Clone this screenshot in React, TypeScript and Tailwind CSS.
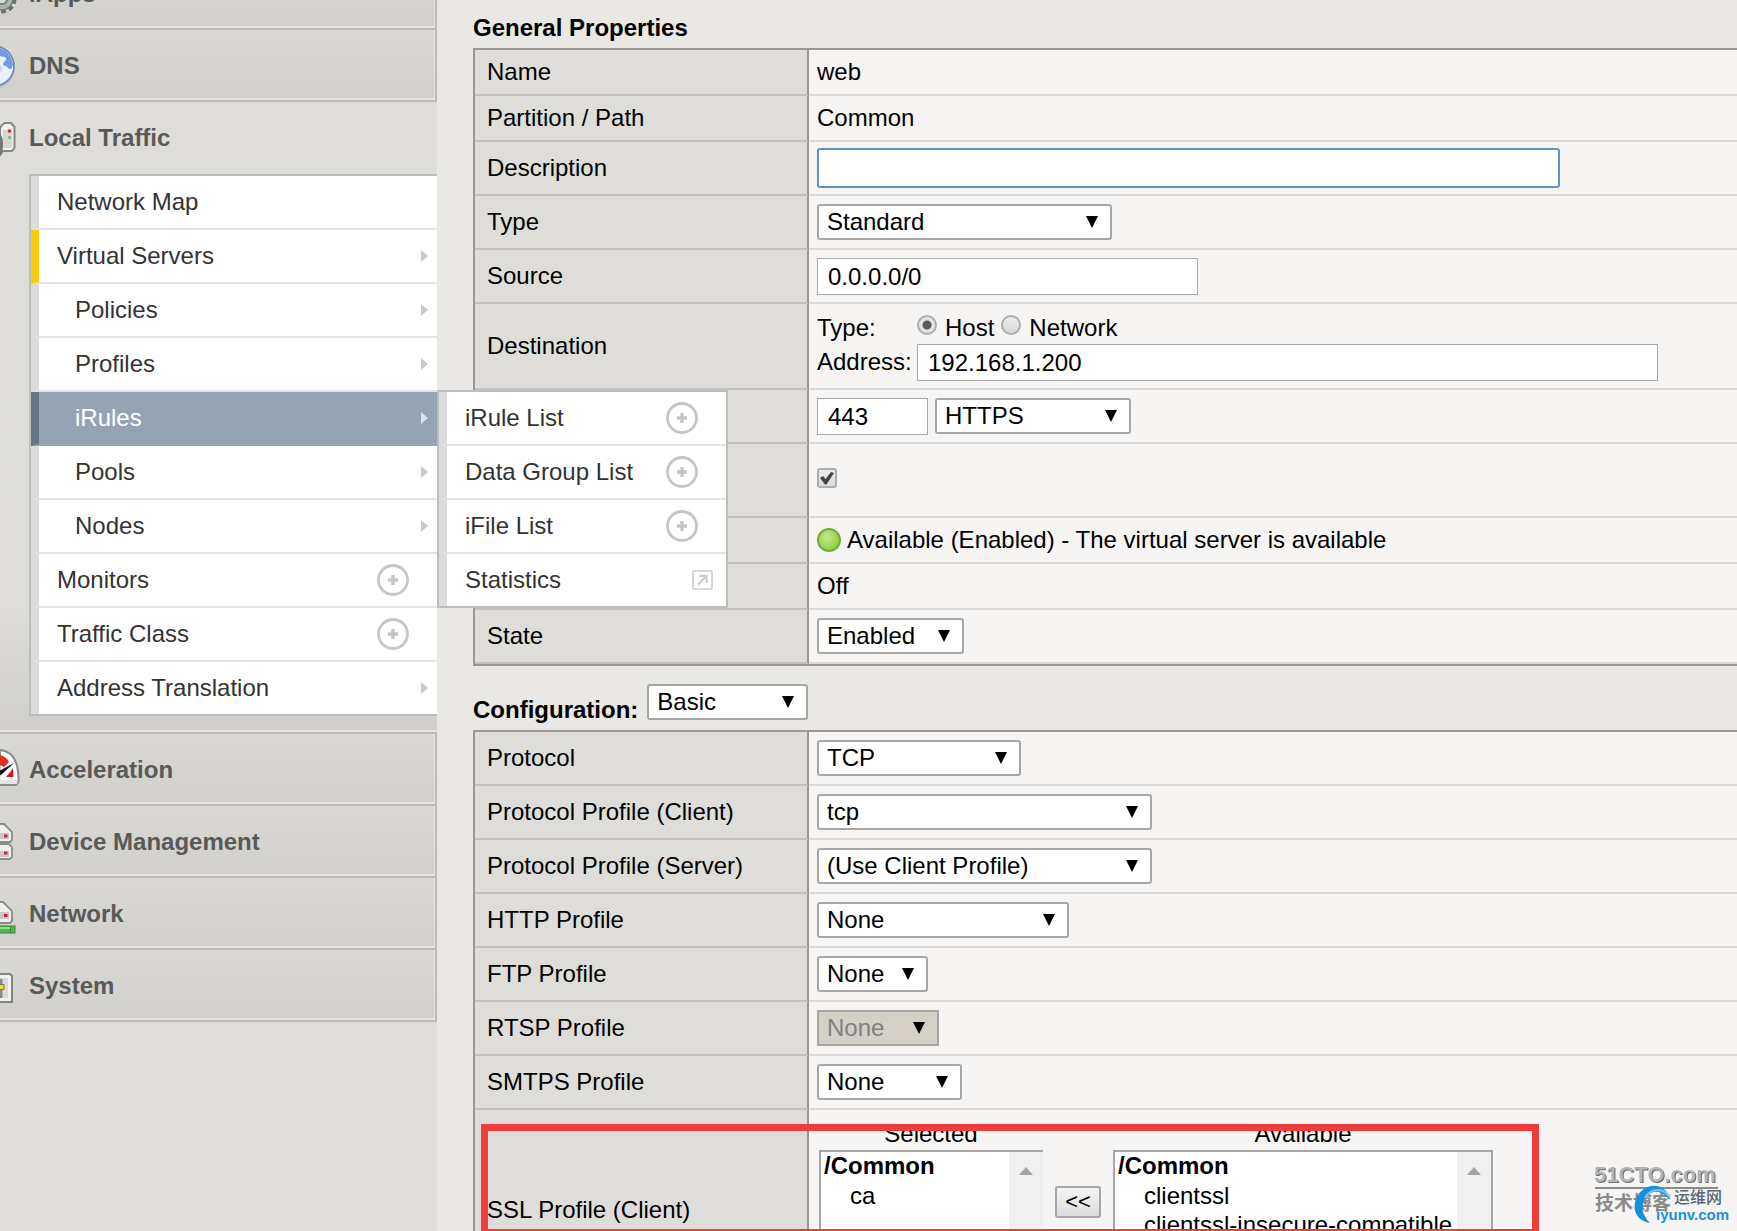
import type { ReactNode } from "react";

interface MenuItem {
  text: string;
  nested?: boolean;
  action?: "arrow" | "plus" | "popup";
  state?: "current" | "hover";
}

const menu: MenuItem[] = [
  { text: "Network Map" },
  { text: "Virtual Servers", action: "arrow", state: "current" },
  { text: "Policies", nested: true, action: "arrow" },
  { text: "Profiles", nested: true, action: "arrow" },
  { text: "iRules", nested: true, action: "arrow", state: "hover" },
  { text: "Pools", nested: true, action: "arrow" },
  { text: "Nodes", nested: true, action: "arrow" },
  { text: "Monitors", action: "plus" },
  { text: "Traffic Class", action: "plus" },
  { text: "Address Translation", action: "arrow" },
];

const flyout: MenuItem[] = [
  { text: "iRule List", action: "plus" },
  { text: "Data Group List", action: "plus" },
  { text: "iFile List", action: "plus" },
  { text: "Statistics", action: "popup" },
];

const profiles = [
  { id: "protocol", label: "Protocol", value: "TCP", width: "w-[204px]" },
  { id: "client", label: "Protocol Profile (Client)", value: "tcp", width: "w-[335px]" },
  { id: "server", label: "Protocol Profile (Server)", value: "(Use Client Profile)", width: "w-[335px]" },
  { id: "http", label: "HTTP Profile", value: "None", width: "w-[252px]" },
  { id: "ftp", label: "FTP Profile", value: "None", width: "w-[111px]" },
  { id: "rtsp", label: "RTSP Profile", value: "None", width: "w-[122px]", disabled: true },
  { id: "smtps", label: "SMTPS Profile", value: "None", width: "w-[145px]" },
];

function Arrow({ light }: { light?: boolean }) {
  return (
    <svg className="mr-[9px] h-3 w-[7px]" viewBox="0 0 7 12">
      <path d="M0 0L7 6L0 12Z" fill={light ? "#dfe3e8" : "#c9c9c9"} />
    </svg>
  );
}

function Plus() {
  return (
    <svg className="mr-7 size-8" viewBox="0 0 32 32" fill="none" stroke="#c6c6c6">
      <circle cx="16" cy="16" r="14.5" strokeWidth="2.8" />
      <path d="M16 11V21M11 16H21" strokeWidth="3.4" />
    </svg>
  );
}

function Popup() {
  return (
    <svg className="mr-[13px] h-5 w-[21px]" viewBox="0 0 21 20" fill="none" stroke="#cccccc">
      <rect x="1" y="1" width="19" height="18" rx="1" strokeWidth="1.6" />
      <path d="M6 14.5L13 7.5" strokeWidth="2.4" />
      <path d="M7.5 5.8H14.6V13" strokeWidth="2.2" />
    </svg>
  );
}

function GearIcon() {
  return (
    <svg className="h-16 w-5" viewBox="0 0 20 64">
      <circle cx="2" cy="39" r="12" fill="none" stroke="#66706b" strokeWidth="5" strokeDasharray="4.5 3" />
      <circle cx="2" cy="39" r="11" fill="#a9b5af" stroke="#6f7b75" strokeWidth="1.5" />
      <circle cx="2" cy="39" r="5" fill="#dedfda" stroke="#77827d" strokeWidth="2" />
    </svg>
  );
}

function GlobeIcon() {
  return (
    <svg className="h-16 w-5" viewBox="0 0 20 64">
      <circle cx="-6" cy="36" r="21" fill="#bcbbb7" opacity=".6" />
      <circle cx="-6" cy="34" r="20" fill="#e9f1fb" stroke="#6686c4" strokeWidth="1.6" />
      <path d="M0 16C6 18 10 23 12 28L13 32C12 37 11 38 8 36C6 33 4 35 3 32C4 29 7 29 6 26C4 24 2 25 0 24Z" fill="#7399e0" />
      <path d="M0 33L3 36L2 39L0 40Z" fill="#c4d7f4" />
    </svg>
  );
}

function ServerIcon() {
  return (
    <svg className="h-16 w-5" viewBox="0 0 20 64">
      <path d="M2 19L5 17H11L14.500 21V42L12 45H3L0 49V22Z" fill="#efefed" stroke="#868683" strokeWidth="2" />
      <rect x="3" y="24" width="9" height="18" fill="#d6d6d4" />
      <path d="M-1 29C3 30 3 46 -1 50" fill="#777" stroke="#777" strokeWidth="2" />
      <circle cx="9.500" cy="25" r="1.800" fill="#d5202a" />
      <path d="M9.500 30V33" stroke="#6fc06c" strokeWidth="2.500" />
    </svg>
  );
}

function GaugeIcon() {
  return (
    <svg className="h-16 w-5" viewBox="0 0 20 64">
      <path d="M0 14C12 15 19 25 18.500 46L16 49H-1Z" fill="#fff" stroke="#8b8b89" strokeWidth="2" />
      <path d="M0 44H17V48H0Z" fill="#e6e6e2" />
      <path d="M0 19C4 20 7 22 9 26L4 31L0 29Z" fill="#e0301f" />
      <path d="M13 32L11 35L6 41H13.500Z" fill="#d8141d" />
      <path d="M-1 35L14 27L1 39L-1 39Z" fill="#111" />
    </svg>
  );
}

function DevicesIcon() {
  return (
    <svg className="h-16 w-5" viewBox="0 0 20 64" stroke="#8b8b89" strokeWidth="1.800">
      <path d="M-1 16H4L12 24V32L10 34H-1Z" fill="#efefed" />
      <path d="M-1 36H9L12 39V49L10 51H-1Z" fill="#efefed" />
      <path d="M0 25H9V31H0M0 43H9V49H0" fill="#c9c9c7" stroke="none" />
      <path d="M4 28H7.500M4 45H7.500" stroke="#d5202a" strokeWidth="3" />
    </svg>
  );
}

function NetworkIcon() {
  return (
    <svg className="h-16 w-5" viewBox="0 0 20 64">
      <path d="M-1 22H3L12 31V41L10 43H-1Z" fill="#efefed" stroke="#8b8b89" strokeWidth="1.800" />
      <rect x="0" y="32" width="9" height="7" fill="#c9c9c7" />
      <path d="M4 35.500H7.500" stroke="#d5202a" strokeWidth="3" />
      <rect x="-1" y="46" width="16" height="7" fill="#46c043" stroke="#4c7d49" />
      <path d="M0 48H10" stroke="#a4e8a0" strokeWidth="1.500" />
      <path d="M10.500 46V53" stroke="#3b8a38" />
    </svg>
  );
}

function SystemIcon() {
  return (
    <svg className="h-16 w-5" viewBox="0 0 20 64">
      <path d="M-1 22H10L12 24V50H-1Z" fill="#f1f1ef" stroke="#83837f" strokeWidth="2" />
      <rect x="0" y="26" width="8" height="20" fill="#dbdbd8" />
      <path d="M1 27V46" stroke="#8a8a88" strokeWidth="3" />
      <path d="M-1 35H4" stroke="#e9dc3c" strokeWidth="4" />
      <path d="M-1 32.500H4V37.500H-1" fill="none" stroke="#777454" />
    </svg>
  );
}

function Section({ title, icon }: { title: string; icon: ReactNode }) {
  return (
    <div className="border-r-2 border-b-2 border-[#bcbbb9]">
      <a
        href="#"
        className="flex h-[70px] items-center gap-[9px] border-r border-b-2 border-[#e6e5e2] bg-linear-to-b from-[#dad9d5] to-[#d0cfcb] font-bold text-[#595959]"
      >
        {icon}
        <span className="pt-1">{title}</span>
      </a>
    </div>
  );
}

function MenuRow({ item, children }: { item: MenuItem; children?: ReactNode }) {
  const colors =
    item.state === "hover"
      ? "border-l-[#677681] border-b-[#96a3b3] bg-[#96a3b3] text-white"
      : item.state === "current"
        ? "border-l-[#fbcb09] border-b-[#e4e4e4] bg-white text-[#333]"
        : "border-l-[#dcdcdc] border-b-[#e4e4e4] bg-white text-[#333]";
  return (
    <li className={`relative h-[54px] border-b-2 border-l-8 last:h-[52px] last:border-b-0 ${colors}`}>
      <a href="#" className={`flex h-[52px] items-center justify-between ${item.nested ? "pl-9" : "pl-[18px]"}`}>
        <span>{item.text}</span>
        {item.action === "arrow" && <Arrow light={item.state === "hover"} />}
        {item.action === "plus" && <Plus />}
        {item.action === "popup" && <Popup />}
      </a>
      {children}
    </li>
  );
}

function Sidebar() {
  return (
    <nav className="w-[437px] shrink-0 bg-[#deddd9]">
      <div className="-mt-[42px]">
        <Section title="iApps" icon={<GearIcon />} />
        <Section title="DNS" icon={<GlobeIcon />} />
      </div>
      <div className="border-b-2 border-[#bcbbb9]">
        <div className="border-b-2 border-[#e6e5e2] bg-linear-to-b from-[#deddd9] from-80% to-[#d0cfcb]">
          <a href="#" className="flex h-[72px] items-center gap-[9px] font-bold text-[#595959]">
            <ServerIcon />
            <span>Local Traffic</span>
          </a>
          <div className="pb-[14px] pl-[29px]">
            <ul className="border-y-2 border-l-2 border-[#bdbdbd]">
              {menu.map((item) => (
                <MenuRow key={item.text} item={item}>
                  {item.state === "hover" && (
                    <ul className="absolute -top-[2px] left-full z-10 w-[291px] border-2 border-[#bdbdbd]">
                      {flyout.map((sub) => (
                        <MenuRow key={sub.text} item={sub} />
                      ))}
                    </ul>
                  )}
                </MenuRow>
              ))}
            </ul>
          </div>
        </div>
      </div>
      <Section title="Acceleration" icon={<GaugeIcon />} />
      <Section title="Device Management" icon={<DevicesIcon />} />
      <Section title="Network" icon={<NetworkIcon />} />
      <Section title="System" icon={<SystemIcon />} />
    </nav>
  );
}

function Select({
  id,
  value,
  width,
  label,
  disabled,
}: {
  id: string;
  value: string;
  width: string;
  label?: string;
  disabled?: boolean;
}) {
  return (
    <span className={`relative inline-block h-9 align-middle ${width}`}>
      <select
        id={id}
        aria-label={label}
        disabled={disabled}
        className={`h-9 w-full appearance-none border-2 border-[#a6a6a6] pl-2 leading-7 ${
          disabled ? "bg-[#d4d0c8] text-[#808080]" : "rounded-[3px] bg-white text-black"
        }`}
      >
        <option>{value}</option>
      </select>
      <svg className="pointer-events-none absolute top-3 right-[14px] size-3" viewBox="0 0 12 12">
        <path d="M0 0H12L6 12Z" />
      </svg>
    </span>
  );
}

function TextBox({
  id,
  value,
  width,
  label,
}: {
  id?: string;
  value: string;
  width: string;
  label?: string;
}) {
  return (
    <input
      id={id}
      type="text"
      aria-label={label}
      defaultValue={value}
      className={`block h-[37px] border border-[#a9a9a9] bg-white px-[10px] pt-[2px] ${width}`}
    />
  );
}

function Row({
  label,
  htmlFor,
  height = "h-[54px]",
  children,
}: {
  label?: string;
  htmlFor?: string;
  height?: string;
  children: ReactNode;
}) {
  return (
    <tr className={height}>
      <th
        scope="row"
        className="w-[334px] border-r-2 border-b-2 border-r-[#999895] border-b-[#c2c1bd] bg-[#deddda] pl-3 text-left font-normal"
      >
        {htmlFor ? <label htmlFor={htmlFor}>{label}</label> : label}
      </th>
      <td className="border-b-2 border-[#dbdad8] bg-[#f6f5f3] pl-2">{children}</td>
    </tr>
  );
}

function Radio({ label, checked }: { label: string; checked?: boolean }) {
  return (
    <label className="flex items-center gap-2">
      <input
        type="radio"
        name="destination-type"
        defaultChecked={checked}
        className="mb-[6px] size-5 appearance-none rounded-full border-2 border-[#adadad] bg-[linear-gradient(#ececec,#d9d9d9)] checked:bg-[radial-gradient(circle,#5c5c5c_4px,#e4e4e4_5px)]"
      />
      {label}
    </label>
  );
}

function ProfileList({
  title,
  options,
  width,
  border,
}: {
  title: string;
  options: string[];
  width: string;
  border: string;
}) {
  const id = `ssl-${title.toLowerCase()}`;
  return (
    <div className={width}>
      <label htmlFor={id} className="block pb-[2px] text-center leading-7">
        {title}
      </label>
      <div className={`flex h-[150px] border-[#a6a6a6] bg-white ${border}`}>
        <select
          id={id}
          multiple
          className="min-w-0 flex-1 overflow-hidden pl-[1px] [scrollbar-width:none]"
        >
          <optgroup label="/Common" className="p-0 leading-[30px] font-bold">
            {options.map((option) => (
              <option key={option} className="p-0 pl-7 leading-[30px] font-normal">
                {option}
              </option>
            ))}
          </optgroup>
        </select>
        <div className="flex w-[34px] justify-center bg-[#f0f0f0] pt-[15px]">
          <svg className="h-2 w-[14px]" viewBox="0 0 14 8">
            <path d="M0 8L7 0L14 8Z" fill="#a3a3a3" />
          </svg>
        </div>
      </div>
    </div>
  );
}

function GeneralProperties() {
  return (
    <section>
      <h2 className="h-12 pt-[14px] leading-7 font-bold">General Properties</h2>
      <table className="w-full border-separate border-spacing-0 border-y-2 border-l-2 border-[#999895]">
        <tbody>
          <Row label="Name" height="h-[46px]">
            web
          </Row>
          <Row label="Partition / Path" height="h-[46px]">
            Common
          </Row>
          <Row label="Description" htmlFor="description">
            <input
              id="description"
              type="text"
              className="block h-10 w-[743px] rounded-[3px] border-2 border-[#6490c8] bg-white px-2 outline-none"
            />
          </Row>
          <Row label="Type" htmlFor="type">
            <Select id="type" value="Standard" width="w-[295px]" />
          </Row>
          <Row label="Source" htmlFor="source">
            <TextBox id="source" value="0.0.0.0/0" width="w-[381px]" />
          </Row>
          <Row label="Destination" height="h-[86px]">
            <div className="grid grid-cols-[100px_1fr] items-center leading-8">
              <span>Type:</span>
              <div className="flex gap-[7px]">
                <Radio label="Host" checked />
                <Radio label="Network" />
              </div>
              <label htmlFor="address">Address:</label>
              <TextBox id="address" value="192.168.1.200" width="w-[741px]" />
            </div>
          </Row>
          <Row>
            <div className="flex gap-[7px]">
              <TextBox label="Port" value="443" width="w-[111px]" />
              <Select id="service" label="Service" value="HTTPS" width="w-[196px]" />
            </div>
          </Row>
          <Row height="h-[74px]">
            <span className="relative mb-1 block size-5">
              <input
                type="checkbox"
                aria-label="Notify"
                defaultChecked
                className="peer block size-5 appearance-none rounded-[3px] border-2 border-[#adadad] bg-[linear-gradient(#ececec,#dcdcdc)]"
              />
              <svg
                className="pointer-events-none absolute inset-0 hidden size-5 peer-checked:block"
                viewBox="0 0 20 20"
              >
                <path d="M3 10L6 8L8.500 11L14 4L17 5L9.500 16.500H8Z" fill="#444" />
              </svg>
            </span>
          </Row>
          <Row height="h-[46px]">
            <div className="flex items-center gap-[6px]">
              <span className="size-6 rounded-full border-2 border-[#74ac3c] bg-[radial-gradient(circle_at_40%_35%,#c3ea86,#7ec434)]" />
              Available (Enabled) - The virtual server is available
            </div>
          </Row>
          <Row height="h-[46px]">Off</Row>
          <Row label="State" htmlFor="state">
            <Select id="state" value="Enabled" width="w-[147px]" />
          </Row>
        </tbody>
      </table>
    </section>
  );
}

function Configuration() {
  return (
    <section>
      <div className="flex h-16 items-end gap-[9px] pb-[6px]">
        <label htmlFor="configuration" className="leading-7 font-bold">
          Configuration:
        </label>
        <div className="mb-1 flex">
          <Select id="configuration" value="Basic" width="w-[161px]" />
        </div>
      </div>
      <div className="relative">
        <table className="w-full border-separate border-spacing-0 border-y-2 border-l-2 border-[#999895]">
          <tbody>
            {profiles.map((profile) => (
              <Row key={profile.id} label={profile.label} htmlFor={profile.id}>
                <Select
                  id={profile.id}
                  value={profile.value}
                  width={profile.width}
                  disabled={profile.disabled}
                />
              </Row>
            ))}
            <Row label="SSL Profile (Client)" height="h-[202px]">
              <div className="flex items-start gap-3 pl-[2px]">
                <ProfileList
                  title="Selected"
                  options={["ca"]}
                  width="w-[224px]"
                  border="border-y-2 border-l-2"
                />
                <button
                  type="button"
                  className="mt-[66px] h-8 w-[46px] rounded-[3px] border-2 border-[#a6a6a6] bg-linear-to-b from-[#f4f4f4] to-[#dcdcdc] text-[22px] leading-6"
                >
                  &lt;&lt;
                </button>
                <ProfileList
                  title="Available"
                  options={["clientssl", "clientssl-insecure-compatible"]}
                  width="w-[380px]"
                  border="border-2"
                />
              </div>
            </Row>
          </tbody>
        </table>
        <div className="pointer-events-none absolute top-[394px] left-2 h-28 w-[1058px] border-[7px] border-[#f03c3a]" />
      </div>
    </section>
  );
}

function Watermark() {
  return (
    <svg className="absolute right-0 bottom-0 h-[91px] w-[157px]" viewBox="0 0 157 91">
      <text
        x="14"
        y="42"
        fontFamily="'Liberation Sans', sans-serif"
        fontWeight="700"
        fontSize="22"
        fill="#b4b4b4"
        className="drop-shadow-[1px_1px_0_#6b6b6b]"
      >
        51CTO.com
      </text>
      <path d="M15 48H138" stroke="#8a8a8a" strokeWidth="2" />
      <g fontFamily="'Noto Sans CJK SC', sans-serif" fontWeight="700">
        <text x="15" y="70" fontSize="19" fill="#8b8b8b">
          技术博客
        </text>
        <text x="94" y="63" fontSize="16" fontWeight="500" fill="#5c6670">
          运维网
        </text>
      </g>
      <path
        d="M90 60C88 44 68 40 58 55C50 69 57 81 70 83C62 75 60 66 66 57C72 49 82 50 90 60Z"
        fill="#1591dc"
      />
      <path d="M90 58C84 47 70 48 65 58" fill="none" stroke="#7fc6f2" strokeWidth="2" />
      <text
        x="76"
        y="80"
        fontFamily="'Liberation Sans', sans-serif"
        fontWeight="700"
        fontSize="15"
        fill="#1b8fe0"
      >
        iyunv.com
      </text>
    </svg>
  );
}

function App() {
  return (
    <div className="relative flex h-screen overflow-hidden bg-[#e9e8e4] font-['Liberation_Sans',Arial,'Noto_Sans_CJK_SC',sans-serif] text-2xl leading-7 text-black">
      <Sidebar />
      <main className="min-w-0 flex-1 pl-9">
        <GeneralProperties />
        <Configuration />
      </main>
      <Watermark />
    </div>
  );
}

export default App;
